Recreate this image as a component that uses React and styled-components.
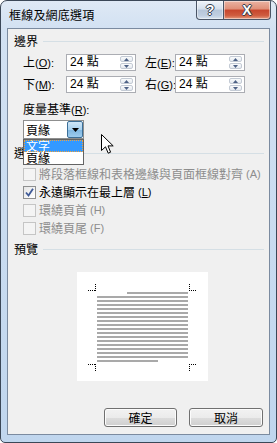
import React from 'react';
import styled, { createGlobalStyle } from 'styled-components';

const GlobalStyle = createGlobalStyle`
  html, body { margin: 0; padding: 0; background: #ffffff; }
  body {
    font-family: "Noto Sans CJK TC", "Liberation Sans", sans-serif;
    font-size: 12px;
    color: #000;
  }
  * { box-sizing: border-box; }
`;

const Win = styled.div`
  width: 277px;
  height: 443px;
  border: 1px solid #3b4757;
  border-radius: 7px 7px 5px 5px;
  background: linear-gradient(180deg, #dfe9f5 0px, #d2e1f2 28px, #c0d6ee 100%);
  padding: 0 6px 7px 6px;
  display: flex;
  flex-direction: column;
  overflow: hidden;
`;

const TitleBar = styled.div`
  height: 27px;
  display: flex;
  justify-content: space-between;
  align-items: flex-start;
  flex: none;
`;

const Title = styled.div`
  margin: 8px 0 0 2px;
  font-size: 12px;
  line-height: 12px;
  letter-spacing: 0.2px;
`;

const CapButtons = styled.div`
  display: flex;
  margin-right: -1px;
`;

const CapButton = styled.div`
  width: ${p => p.$w}px;
  height: 19px;
  border: 1px solid #4a5566;
  border-top: none;
  border-radius: ${p => (p.$close ? '0 0 4px 0' : '0 0 0 4px')};
  background: ${p =>
    p.$close
      ? 'linear-gradient(180deg, #eab3a3 0%, #e08f78 45%, #c7452c 50%, #cf5c3f 80%, #e59a7c 100%)'
      : 'linear-gradient(180deg, #eef3f9 0%, #d4dfec 45%, #b6c6d9 50%, #bfcee0 80%, #d7e2ee 100%)'};
  box-shadow: inset 0 0 0 1px rgba(255, 255, 255, 0.45);
  display: flex;
  align-items: center;
  justify-content: center;
  color: #fff;
  font-family: "Liberation Sans", sans-serif;
  font-weight: bold;
  font-size: 14px;
  line-height: 14px;
  text-shadow: 1px 0 0 #333d4c, -1px 0 0 #333d4c, 0 1px 0 #333d4c, 0 -1px 0 #333d4c;
  & + & { border-left: none; }
`;

const Client = styled.div`
  flex: 1;
  position: relative;
  border: 1px solid #7b8ba0;
  background: #f0f0f0;
  padding: 0 5px 0 6px;
  display: flex;
  flex-direction: column;
`;

const GroupHeader = styled.div`
  display: flex;
  align-items: center;
  height: 12px;
  line-height: 12px;
  margin-top: ${p => p.$mt}px;
  font-size: 12px;
  &::after {
    content: '';
    flex: 1;
    height: 1px;
    margin-left: 5px;
    background: #d5dfe5;
  }
`;

const FieldGrid = styled.div`
  margin-top: 7px;
  padding-left: 9px;
  display: grid;
  grid-template-columns: 43px 70px 39px 70px;
  grid-auto-rows: 17px;
  row-gap: 5px;
  align-items: center;
  & > :nth-child(4n + 3) { margin-left: 9px; }
`;

const FieldLabel = styled.label`
  font-size: 12px;
  line-height: 12px;
  white-space: nowrap;
`;

const Mn = styled.span`
  font-family: "Liberation Sans", sans-serif;
  font-size: 11px;
  u { text-decoration: underline; }
`;

const SpinBox = styled.div`
  height: 17px;
  border: 1px solid #abadb3;
  background: #fff;
  display: flex;
  align-items: stretch;
`;

const SpinText = styled.div`
  flex: 1;
  padding-left: 3px;
  font-family: "Liberation Sans", "Noto Sans CJK TC", sans-serif;
  font-size: 12px;
  line-height: 15px;
`;

const Spin = styled.div`
  width: 13px;
  margin: 1px 2px 1px 0;
  display: flex;
  flex-direction: column;
  gap: 1px;
`;

const SpinBtn = styled.div`
  flex: 1;
  border: 1px solid #c3cad4;
  border-radius: 2px;
  background: linear-gradient(180deg, #fafbfc, #e4e9ef);
  display: flex;
  align-items: center;
  justify-content: center;
`;

const Measure = styled.div`
  margin: 10px 0 0 9px;
  font-size: 12px;
  line-height: 12px;
`;

const SelectWrap = styled.div`
  position: relative;
  margin: 4px 0 0 9px;
  width: 61px;
  height: 19px;
  border: 1px solid #8e8f8f;
  background: #fff;
  display: flex;
`;

const SelectText = styled.div`
  flex: 1;
  padding-left: 2px;
  line-height: 17px;
  font-size: 12px;
`;

const SelectArrow = styled.div`
  width: 16px;
  border: 1px solid #3c6f98;
  border-radius: 2px;
  background: linear-gradient(180deg, #cfe6f7 0%, #a9d2ef 50%, #7fb6e0 51%, #9ccbee 100%);
  display: flex;
  align-items: center;
  justify-content: center;
`;

const DropList = styled.div`
  position: absolute;
  left: -1px;
  top: 18px;
  width: 61px;
  border: 1px solid #646464;
  background: #fff;
  z-index: 2;
`;

const DropItem = styled.div`
  height: 12px;
  line-height: 12px;
  padding-left: 2px;
  font-size: 12px;
  color: ${p => (p.$sel ? '#fff' : '#000')};
  background: ${p => (p.$sel ? '#3399ff' : 'transparent')};
  outline: ${p => (p.$sel ? '1px dotted #f2a23a' : 'none')};
  outline-offset: -1px;
`;

const Checks = styled.div`
  margin-top: 6px;
  padding-left: 9px;
  display: flex;
  flex-direction: column;
`;

const CheckRow = styled.div`
  height: 18px;
  display: flex;
  align-items: center;
  gap: 3px;
  color: ${p => (p.$disabled ? '#8d8d8d' : '#000')};
  font-size: 12px;
  line-height: 12px;
  white-space: nowrap;
`;

const Box = styled.span`
  width: 13px;
  height: 13px;
  flex: none;
  border: 1px solid ${p => (p.$disabled ? '#c5c5c5' : '#8e8f8f')};
  background: ${p => (p.$disabled ? '#f4f4f4' : 'linear-gradient(135deg, #e6e6e6, #ffffff)')};
  display: flex;
  align-items: center;
  justify-content: center;
`;

const Latin = styled.span`
  font-family: "Liberation Sans", sans-serif;
  font-size: 11px;
`;

const Preview = styled.svg`
  display: block;
  margin: 17px 0 0 63px;
  background: #fff;
`;

const Footer = styled.div`
  margin-top: auto;
  margin-bottom: 7px;
  display: flex;
  justify-content: flex-end;
  gap: 12px;
  padding-right: 1px;
`;

const Btn = styled.div`
  width: ${p => p.$w}px;
  height: 19px;
  border: 1px solid #707070;
  border-radius: 3px;
  background: linear-gradient(180deg, #f2f2f2 0%, #ebebeb 50%, #dddddd 51%, #cfcfcf 100%);
  box-shadow: inset 0 0 0 1px #fcfcfc;
  display: flex;
  align-items: center;
  justify-content: center;
  font-size: 12px;
  line-height: 12px;
`;

const Cursor = styled.svg`
  position: absolute;
  left: 93px;
  top: 105px;
  z-index: 3;
`;

const Tri = ({ down }) => (
  <svg width="5" height="3" viewBox="0 0 5 3">
    <path d={down ? 'M0 0H5L2.5 3Z' : 'M0 3H5L2.5 0Z'} fill="#4d6185" />
  </svg>
);

const Spinner = ({ value }) => (
  <SpinBox>
    <SpinText>{value}</SpinText>
    <Spin>
      <SpinBtn><Tri /></SpinBtn>
      <SpinBtn><Tri down /></SpinBtn>
    </Spin>
  </SpinBox>
);

const Check = ({ disabled, checked, children }) => (
  <CheckRow $disabled={disabled}>
    <Box $disabled={disabled}>
      {checked && (
        <svg width="9" height="9" viewBox="0 0 9 9">
          <path d="M1 4.5 L3.5 7.5 L8 0.8" stroke="#3f5a97" strokeWidth="1.8" fill="none" />
        </svg>
      )}
    </Box>
    {children}
  </CheckRow>
);

const lines = Array.from({ length: 18 }, (_, i) => {
  const x1 = i === 0 ? 50 : 20;
  const x2 = i === 17 ? 81 : 111;
  return { y: 20 + i * 4, x1, w: x2 - x1 };
});

const App = () => (
  <>
    <GlobalStyle />
    <Win>
      <TitleBar>
        <Title>框線及網底選項</Title>
        <CapButtons>
          <CapButton $w={28}>?</CapButton>
          <CapButton $w={47} $close>X</CapButton>
        </CapButtons>
      </TitleBar>
      <Client>
        <GroupHeader $mt={6}>邊界</GroupHeader>
        <FieldGrid>
          <FieldLabel>上<Mn>(<u>O</u>):</Mn></FieldLabel>
          <Spinner value="24 點" />
          <FieldLabel>左<Mn>(<u>E</u>):</Mn></FieldLabel>
          <Spinner value="24 點" />
          <FieldLabel>下<Mn>(<u>M</u>):</Mn></FieldLabel>
          <Spinner value="24 點" />
          <FieldLabel>右<Mn>(<u>G</u>):</Mn></FieldLabel>
          <Spinner value="24 點" />
        </FieldGrid>
        <Measure>度量基準<Mn>(<u>R</u>):</Mn></Measure>
        <SelectWrap>
          <SelectText>頁緣</SelectText>
          <SelectArrow>
            <svg width="7" height="4" viewBox="0 0 7 4">
              <path d="M0 0H7L3.5 4Z" fill="#000" />
            </svg>
          </SelectArrow>
          <DropList>
            <DropItem $sel>文字</DropItem>
            <DropItem>頁緣</DropItem>
          </DropList>
        </SelectWrap>
        <GroupHeader $mt={8}>選項</GroupHeader>
        <Checks>
          <Check disabled>將段落框線和表格邊緣與頁面框線對齊<Latin>(A)</Latin></Check>
          <Check checked>永遠顯示在最上層<Mn>(<u>L</u>)</Mn></Check>
          <Check disabled>環繞頁首<Latin>(H)</Latin></Check>
          <Check disabled>環繞頁尾<Latin>(F)</Latin></Check>
        </Checks>
        <GroupHeader $mt={6}>預覽</GroupHeader>
        <Preview width="131" height="109" viewBox="0 0 131 109">
          {lines.map((l, i) => (
            <rect key={i} x={l.x1} y={l.y} width={l.w} height="2" fill="#a9a9a9" />
          ))}
          <g stroke="#000" strokeWidth="1" strokeDasharray="1 1" fill="none">
            <path d="M18.5 12V19M11 18.5H19" />
            <path d="M112.5 12V19M112 18.5H120" />
            <path d="M18.5 92V99M11 92.5H19" />
            <path d="M112.5 92V99M112 92.5H120" />
          </g>
        </Preview>
        <Footer>
          <Btn $w={73}>確定</Btn>
          <Btn $w={74}>取消</Btn>
        </Footer>
        <Cursor width="13" height="21" viewBox="0 0 13 21">
          <path d="M0.5 0.5V16.5L4.5 12.8L7.2 19.2L9.6 18.2L7 11.9H12.2Z" fill="#fff" stroke="#000" strokeWidth="1" strokeLinejoin="miter" />
        </Cursor>
      </Client>
    </Win>
  </>
);

export default App;
